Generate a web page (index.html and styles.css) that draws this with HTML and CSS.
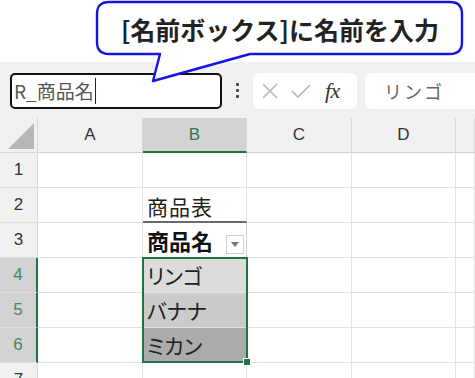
FILE: index.html
```html
<!DOCTYPE html>
<html lang="ja">
<head>
<meta charset="utf-8">
<link rel="stylesheet" href="styles.css">
</head>
<body>
<div class="page">
  <div class="top"></div>
  <div class="fbar">
    <div class="namebox"><span class="nb-text">R_商品名</span><span class="caret"></span></div>
    <div class="dots"><i></i><i></i><i></i></div>
    <div class="fxbox">
      <svg class="ico" width="18" height="18" viewBox="0 0 18 18"><path d="M2 2 L16 16 M16 2 L2 16" stroke="#b8b8b8" stroke-width="1.6" fill="none"/></svg>
      <svg class="ico" width="20" height="18" viewBox="0 0 20 18"><path d="M1 9 L7 15 L19 3" stroke="#b8b8b8" stroke-width="1.6" fill="none"/></svg>
      <span class="fx">fx</span>
    </div>
    <div class="content"><span>リンゴ</span></div>
  </div>
  <div class="sheet">
    <div class="corner"><span class="tri"></span></div>
    <div class="ch">A</div>
    <div class="ch sel">B</div>
    <div class="ch">C</div>
    <div class="ch">D</div>
    <div class="ch"></div>

    <div class="rh">1</div><div class="c"></div><div class="c"></div><div class="c"></div><div class="c"></div><div class="c"></div>
    <div class="rh">2</div><div class="c"></div><div class="c title">商品表</div><div class="c"></div><div class="c"></div><div class="c"></div>
    <div class="rh">3</div><div class="c"></div><div class="c head"><b>商品名</b><span class="filter"><svg width="8" height="5" viewBox="0 0 8 5"><path d="M0 0 H8 L4 5 Z" fill="#777"/></svg></span></div><div class="c"></div><div class="c"></div><div class="c"></div>
    <div class="rh rsel">4</div><div class="c"></div><div class="c v1">リンゴ</div><div class="c"></div><div class="c"></div><div class="c"></div>
    <div class="rh rsel">5</div><div class="c"></div><div class="c v2">バナナ</div><div class="c"></div><div class="c"></div><div class="c"></div>
    <div class="rh rsel">6</div><div class="c"></div><div class="c v3">ミカン</div><div class="c"></div><div class="c"></div><div class="c"></div>
    <div class="rh">7</div><div class="c"></div><div class="c"></div><div class="c"></div><div class="c"></div><div class="c"></div>

    <div class="selbox"><span class="handle"></span></div>
  </div>

  <div class="callout">
    <svg width="475" height="90" viewBox="0 0 475 90">
      <path d="M109 2 H450 Q462 2 462 14 V42 Q462 54 450 54 H250 L153 81 L160 54 H109 Q97 54 97 42 V14 Q97 2 109 2 Z" fill="#fff" stroke="#1414e6" stroke-width="2.4" stroke-linejoin="round"/>
    </svg>
    <div class="ctext">[名前ボックス]に名前を入力</div>
  </div>
</div>
</body>
</html>
```
FILE: styles.css
```css
html, body {
  margin: 0;
  padding: 0;
  background: #fff;
}
.page {
  position: relative;
  width: 475px;
  height: 378px;
  overflow: hidden;
  font-family: "Noto Sans CJK JP", "Noto Sans", sans-serif;
}
.top {
  height: 62px;
  background: #fff;
}
.fbar {
  height: 56px;
  background: #f1f1f1;
  display: flex;
  align-items: center;
  padding-left: 10px;
  box-sizing: border-box;
}
.namebox {
  width: 212px;
  height: 36px;
  box-sizing: border-box;
  border: 2px solid #111;
  border-radius: 5px;
  background: #fff;
  display: flex;
  align-items: center;
  padding-left: 2px;
  margin-top: 1px;
}
.nb-text {
  font-size: 19px;
  color: #555;
  line-height: 1;
}
.caret {
  width: 1px;
  height: 26px;
  background: #222;
  margin-left: 1px;
}
.dots {
  width: 31px;
  display: flex;
  flex-direction: column;
  align-items: center;
  gap: 3px;
}
.dots i {
  width: 3px;
  height: 3px;
  background: #444;
  border-radius: 1px;
}
.fxbox {
  width: 104px;
  height: 36px;
  background: #fff;
  border-radius: 6px;
  display: flex;
  align-items: center;
  padding-left: 8px;
  box-sizing: border-box;
  gap: 12px;
  margin-top: 1px;
}
.fx {
  font-family: "Liberation Serif", "DejaVu Serif", serif;
  font-style: italic;
  font-size: 22px;
  color: #333;
  margin-left: 2px;
  letter-spacing: -0.5px;
}
.content {
  flex: 1;
  height: 36px;
  margin-left: 8px;
  background: #fff;
  border-radius: 6px 0 0 6px;
  display: flex;
  align-items: center;
  padding-left: 19px;
  margin-top: 1px;
}
.content span {
  font-size: 18px;
  color: #666;
  letter-spacing: 2px;
}
.sheet {
  position: relative;
  display: grid;
  grid-template-columns: 38px 105px 104px 105px 104px 1fr;
  grid-template-rows: 35px repeat(7, 35px);
}
.sheet > div {
  box-sizing: border-box;
}
.corner {
  background: #f1f1f1;
  border-right: 1px solid #d8d8d8;
  border-bottom: 1px solid #d8d8d8;
  position: relative;
}
.tri {
  position: absolute;
  right: 3px;
  bottom: 3px;
  width: 0;
  height: 0;
  border-left: 26px solid transparent;
  border-bottom: 26px solid #b7b7b7;
}
.ch {
  background: #f1f1f1;
  border-right: 1px solid #d8d8d8;
  border-bottom: 1px solid #d0d0d0;
  display: flex;
  align-items: center;
  justify-content: center;
  font-family: "Liberation Sans", Arial, sans-serif;
  font-size: 17px;
  color: #333;
}
.ch.sel {
  background: #d3d3d3;
  color: #2e7a52;
  border-bottom: 2px solid #217346;
}
.rh {
  background: #f1f1f1;
  border-right: 1px solid #d8d8d8;
  border-bottom: 1px solid #dedede;
  display: flex;
  align-items: center;
  justify-content: center;
  font-family: "Liberation Sans", Arial, sans-serif;
  font-size: 17px;
  color: #333;
}
.rh.rsel {
  background: #d3d3d3;
  color: #3c8a62;
  border-right: 2px solid #217346;
}
.c {
  border-right: 1px solid #e2e2e2;
  border-bottom: 1px solid #e2e2e2;
  display: flex;
  align-items: center;
  padding-left: 4px;
  font-size: 21px;
  font-feature-settings: "palt";
  color: #222;
}
.title {
  border-bottom: 2px solid #6b6b6b;
  padding-top: 2px;
  letter-spacing: 1px;
}
.head {
  justify-content: space-between;
  padding-right: 2px;
  border-right: 1px solid #cfcfcf;
}
.head b {
  font-weight: 700;
  color: #111;
  font-size: 22px;
}
.filter {
  width: 18px;
  height: 19px;
  border: 1px solid #cfcfcf;
  background: #fff;
  display: flex;
  align-items: center;
  justify-content: center;
  box-sizing: border-box;
  margin-top: 8px;
}
.v1 { background: #dcdcdc; }
.v2 { background: #cbcbcb; }
.v3 { background: #ababab; }
.selbox {
  position: absolute;
  left: 142px;
  top: 139px;
  width: 106px;
  height: 106px;
  border: 2px solid #217346;
  box-sizing: border-box;
  pointer-events: none;
}
.handle {
  position: absolute;
  right: -5px;
  bottom: -5px;
  width: 6px;
  height: 6px;
  background: #217346;
  border: 1px solid #fff;
}
.callout {
  position: absolute;
  left: 0;
  top: 0;
  width: 475px;
  height: 90px;
}
.callout svg {
  position: absolute;
  left: 0;
  top: 0;
}
.ctext {
  position: absolute;
  left: 97px;
  top: 3px;
  width: 366px;
  height: 52px;
  display: flex;
  align-items: center;
  justify-content: center;
  font-size: 25px;
  font-weight: 700;
  color: #222;
}
```
